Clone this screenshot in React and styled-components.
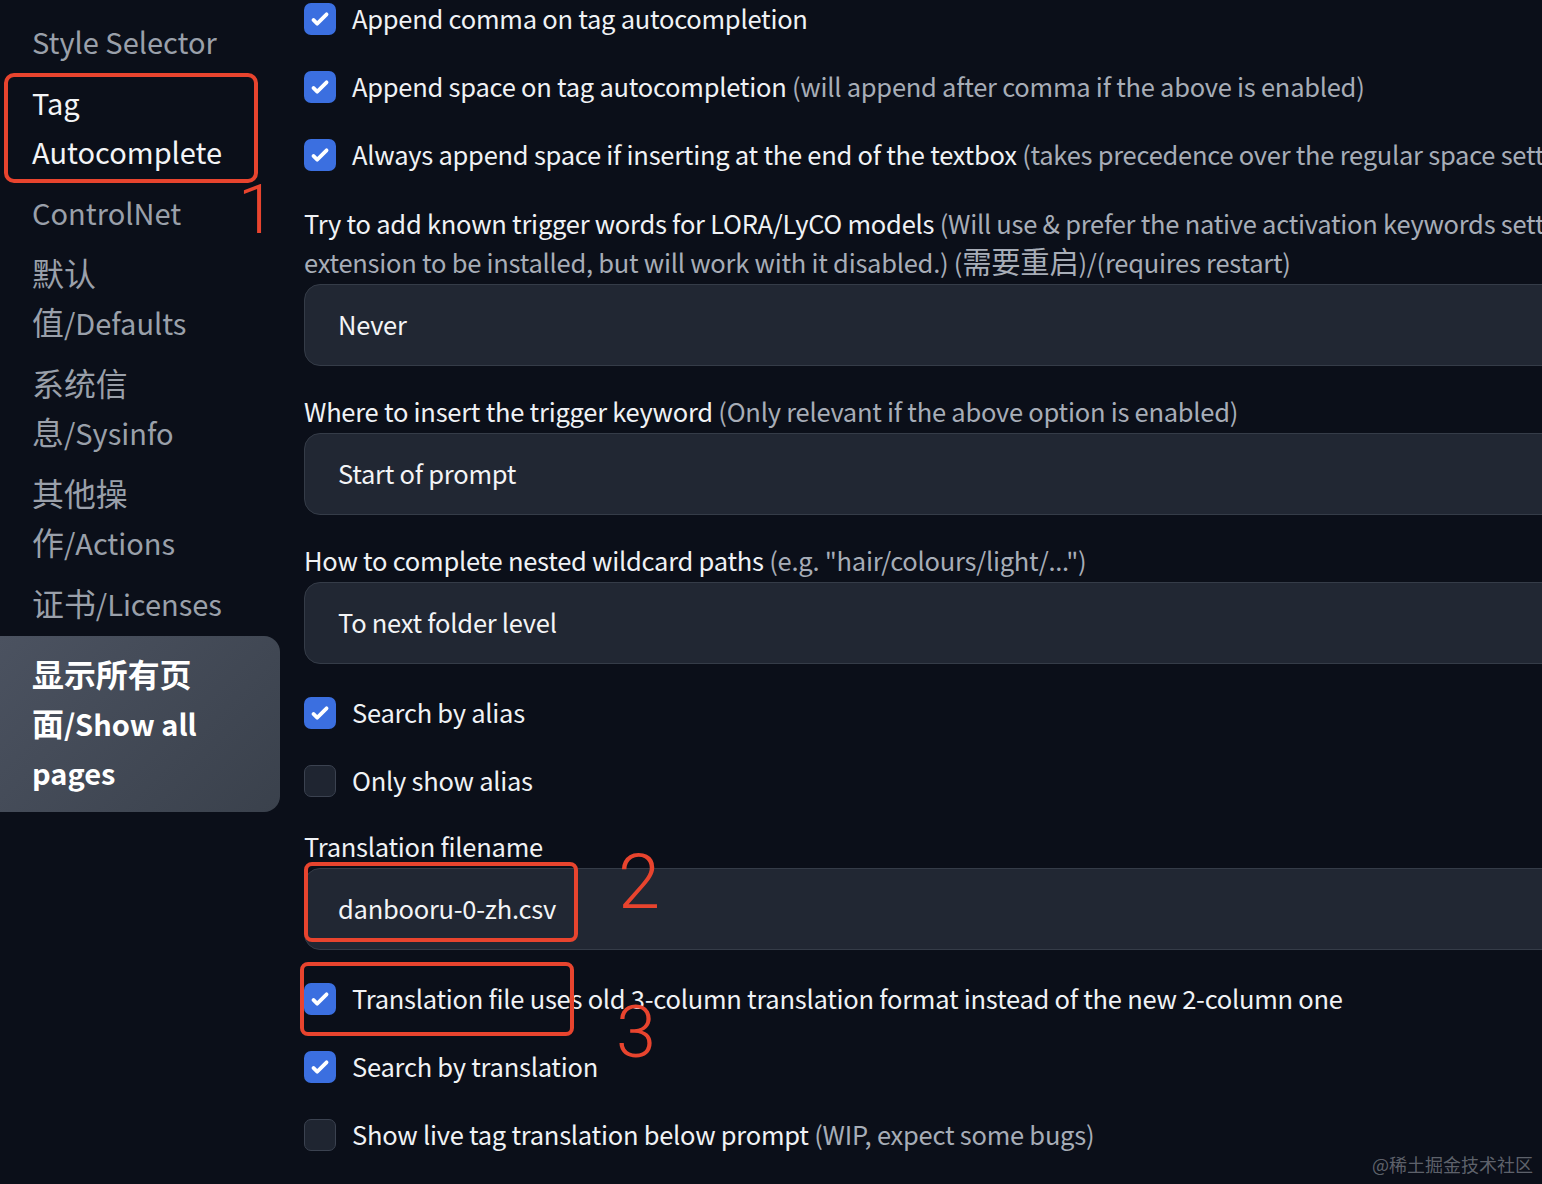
import React from "react";
import styled, { createGlobalStyle } from "styled-components";

const Global = createGlobalStyle`
  html, body {
    margin: 0;
    padding: 0;
    background: #0b0f19;
    overflow: hidden;
  }
  body {
    font-family: "Noto Sans CJK SC", "Noto Sans", sans-serif;
    color: #f0f2f5;
  }
`;

const Page = styled.div`
  position: relative;
  width: 1542px;
  height: 1184px;
  overflow: hidden;
  display: flex;
  align-items: flex-start;
  background: #0b0f19;
`;

const Sidebar = styled.nav`
  width: 280px;
  flex: 0 0 280px;
  padding-top: 11px;
  display: flex;
  flex-direction: column;
`;

const NavItem = styled.div`
  padding: 6px 0 6px 32px;
  font-size: 29px;
  line-height: 49px;
  height: ${(p) => (p.$lines || 1) * 49}px;
  color: ${(p) => (p.$active ? "#f3f4f6" : "#9aa0aa")};
  white-space: nowrap;
`;

const NavSelected = styled.div`
  margin-top: 2px;
  padding: 14px 0 15px 32px;
  height: 147px;
  border-radius: 0 16px 16px 0;
  background: linear-gradient(135deg, #4b5260 0%, #3a414c 100%);
  font-size: 29px;
  line-height: 49px;
  font-weight: 700;
  color: #ffffff;
  white-space: nowrap;
`;

const Han = styled.span`
  font-size: ${(p) => p.$scale || 1.1}em;
  line-height: 0;
`;

const Main = styled.main`
  flex: 0 0 1420px;
  margin-top: -15px;
  padding-left: 24px;
  display: flex;
  flex-direction: column;
  font-size: 25.5px;
  letter-spacing: -0.25px;
`;

const CheckRow = styled.div`
  height: 68px;
  display: flex;
  align-items: center;
  gap: 16px;
  white-space: nowrap;
  color: #f0f2f5;
`;

const CheckText = styled.span`
  padding-bottom: 4px;
`;

const Box = styled.span`
  width: 32px;
  height: 32px;
  flex: 0 0 32px;
  box-sizing: border-box;
  border-radius: 7px;
  display: flex;
  align-items: center;
  justify-content: center;
  background: ${(p) => (p.$checked ? "#3b6fe0" : "#1f2531")};
  border: ${(p) => (p.$checked ? "none" : "1.5px solid #3b4250")};
`;

const Field = styled.div`
  padding-top: ${(p) => p.$gap}px;
  display: flex;
  flex-direction: column;
`;

const Label = styled.div`
  line-height: 38.5px;
  white-space: nowrap;
  color: #f0f2f5;
  margin-bottom: 3px;
`;

const Hint = styled.span`
  color: #a7adb7;
`;

const Input = styled.div`
  height: 82px;
  box-sizing: border-box;
  border: 1.5px solid #353c48;
  border-radius: 16px;
  background: #212733;
  display: flex;
  align-items: center;
  padding: 0 0 4px 33px;
  color: #f3f4f6;
`;

const Spacer = styled.div`
  height: ${(p) => p.$h}px;
  flex: 0 0 auto;
`;

const Mark = styled.div`
  position: absolute;
  left: ${(p) => p.$x}px;
  top: ${(p) => p.$y}px;
  width: ${(p) => p.$w}px;
  height: ${(p) => p.$h}px;
  box-sizing: border-box;
  border: 4px solid #e8442e;
  border-radius: ${(p) => p.$r}px;
  pointer-events: none;
`;

const Num = styled.div`
  position: absolute;
  left: ${(p) => p.$x}px;
  top: ${(p) => p.$y}px;
  font-family: Roboto, "Liberation Sans", sans-serif;
  font-weight: 300;
  font-size: ${(p) => p.$s}px;
  line-height: 1;
  color: #e8442e;
`;

const Watermark = styled.div`
  position: absolute;
  right: 9px;
  bottom: 7px;
  font-size: 18px;
  font-family: "Noto Sans CJK SC", sans-serif;
  color: rgba(200, 204, 212, 0.45);
`;

const Check = () => (
  <svg width="30" height="30" viewBox="0 0 16 16" fill="#ffffff">
    <path d="M12.207 4.793a1 1 0 010 1.414l-5 5a1 1 0 01-1.414 0l-2-2a1 1 0 011.414-1.414L6.5 9.086l4.293-4.293a1 1 0 011.414 0z" />
  </svg>
);

const Checkbox = ({ checked, children }) => (
  <CheckRow>
    <Box $checked={checked}>{checked && <Check />}</Box>
    <CheckText>{children}</CheckText>
  </CheckRow>
);

export default function App() {
  return (
    <>
      <Global />
      <Page>
        <Sidebar>
          <NavItem>Style Selector</NavItem>
          <NavItem $active $lines={2}>
            Tag
            <br />
            Autocomplete
          </NavItem>
          <NavItem>ControlNet</NavItem>
          <NavItem $lines={2}>
            <Han>默认</Han>
            <br />
            <Han>值</Han>/Defaults
          </NavItem>
          <NavItem $lines={2}>
            <Han>系统信</Han>
            <br />
            <Han>息</Han>/Sysinfo
          </NavItem>
          <NavItem $lines={2}>
            <Han>其他操</Han>
            <br />
            <Han>作</Han>/Actions
          </NavItem>
          <NavItem>
            <Han>证书</Han>/Licenses
          </NavItem>
          <NavSelected>
            <Han>显示所有页</Han>
            <br />
            <Han>面</Han>/Show all
            <br />
            pages
          </NavSelected>
        </Sidebar>

        <Main>
          <Checkbox checked>Append comma on tag autocompletion</Checkbox>
          <Checkbox checked>
            Append space on tag autocompletion{" "}
            <Hint>(will append after comma if the above is enabled)</Hint>
          </Checkbox>
          <Checkbox checked>
            Always append space if inserting at the end of the textbox{" "}
            <Hint>(takes precedence over the regular space setting for that position)</Hint>
          </Checkbox>

          <Field $gap={15}>
            <Label>
              Try to add known trigger words for LORA/LyCO models{" "}
              <Hint>
                (Will use &amp; prefer the native activation keywords settings of the Lora/LyCO
                extension if available. Doesn't require the
                <br />
                extension to be installed, but will work with it disabled.) (<Han $scale={1.15}>需要重启</Han>)/(requires restart)
              </Hint>
            </Label>
            <Input>Never</Input>
          </Field>

          <Field $gap={25.5}>
            <Label>
              Where to insert the trigger keyword <Hint>(Only relevant if the above option is enabled)</Hint>
            </Label>
            <Input>Start of prompt</Input>
          </Field>

          <Field $gap={25.5}>
            <Label>
              How to complete nested wildcard paths <Hint>(e.g. "hair/colours/light/...")</Hint>
            </Label>
            <Input>To next folder level</Input>
          </Field>

          <Spacer $h={15} />
          <Checkbox checked>Search by alias</Checkbox>
          <Checkbox>Only show alias</Checkbox>

          <Field $gap={11.5}>
            <Label>Translation filename</Label>
            <Input>danbooru-0-zh.csv</Input>
          </Field>

          <Spacer $h={15} />
          <Checkbox checked>
            Translation file uses old 3-column translation format instead of the new 2-column one
          </Checkbox>
          <Checkbox checked>Search by translation</Checkbox>
          <Checkbox>
            Show live tag translation below prompt <Hint>(WIP, expect some bugs)</Hint>
          </Checkbox>
        </Main>

        <Mark $x={4} $y={73} $w={254} $h={110} $r={10} />
        <Num $x={238} $y={176} $s={68}>1</Num>
        <Mark $x={304} $y={862} $w={274} $h={80} $r={8} />
        <Num $x={618} $y={844} $s={76}>2</Num>
        <Mark $x={300} $y={962} $w={274} $h={74} $r={8} />
        <Num $x={616} $y={997} $s={72}>3</Num>

        <Watermark>@稀土掘金技术社区</Watermark>
      </Page>
    </>
  );
}
